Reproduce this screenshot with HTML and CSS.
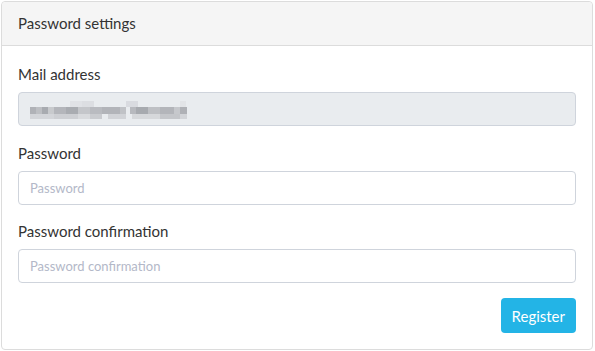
FILE: index.html
```html
<!DOCTYPE html>
<html lang="en">
<head>
    <meta charset="UTF-8">
    <meta name="viewport" content="width=device-width, initial-scale=1.0">
    <title>Password settings</title>
    <link rel="stylesheet" href="styles.css">
</head>
<body>

<div class="card">
    <div class="card-header">Password settings</div>

    <form class="card-body">
        <div class="form-group">
            <label class="form-label">Mail address</label>
            <div class="form-control disabled">
                <div class="masked-text"></div>
            </div>
        </div>

        <div class="form-group">
            <label class="form-label" for="password">Password</label>
            <input type="password" id="password" class="form-control" placeholder="Password">
        </div>

        <div class="form-group">
            <label class="form-label" for="passwordConfirm">Password confirmation</label>
            <input type="password" id="passwordConfirm" class="form-control" placeholder="Password confirmation">
        </div>

        <div class="form-actions">
            <button type="button" class="btn-register">Register</button>
        </div>
    </form>
</div>

</body>
</html>
```

FILE: styles.css
```css
* {
    box-sizing: border-box;
}
body {
    font-family: 'Lato', 'Liberation Sans', sans-serif;
    font-size: 15px;
    color: #333;
    background: #fff;
    margin: 1px;
}
.card {
    background-color: #fff;
    border: 1px solid #dcdcdc;
    border-radius: 4px;
    width: 592px;
    height: 349px;
}
.card-header {
    background-color: #f5f5f5;
    border-bottom: 1px solid #dcdcdc;
    border-radius: 4px 4px 0 0;
    padding: 10px 16px;
    height: 44px;
    line-height: 23px;
    font-size: 15px;
    color: #333;
}
.card-body {
    padding: 18px 16px 16px;
}
.form-group {
    margin-bottom: 16.5px;
}
.form-label {
    display: block;
    line-height: 21px;
    margin-bottom: 7px;
}
.form-control {
    display: block;
    width: 100%;
    height: 34px;
    padding: 6px 11px;
    font-family: inherit;
    font-size: 13px;
    color: #333;
    background-color: #fff;
    border: 1px solid #cfd4dc;
    border-radius: 4px;
    outline: none;
}
.form-control::placeholder {
    color: #b3b8c8;
}
.form-control.disabled {
    background-color: #e9ecef;
    padding: 8px 11px;
}

/* pixelated (hidden) address */
.masked-text {
    width: 157px;
    height: 18px;
    background:
        linear-gradient(to right, transparent 0 40px, #e0e2e6 40px 52px, transparent 52px 52px, #dcdee2 52px 64px, transparent 64px 96px, #d9dbe0 96px 108px, transparent 108px 150px, #e2e4e7 150px 156px, transparent 156px) 0 0 / 100% 6px no-repeat,
        linear-gradient(to right, #b0b2b7 0 6px, #bdbfc3 6px 12px, #a8abb0 12px 18px, #c8cacd 18px 24px, #b4b6bb 24px 36px, #a9acb1 36px 48px, #c4c6ca 48px 60px, #b9bbc0 60px 72px, #b2b4b9 72px 90px, #c0c2c6 90px 96px, transparent 96px 100px, #b7b9be 100px 106px, #a7aaaf 106px 118px, #bec0c4 118px 130px, #b3b5ba 130px 144px, #c6c8cc 144px 150px, #afb1b6 150px 157px) 0 6px / 100% 7px no-repeat,
        linear-gradient(to right, #d3d5d9 0 24px, #cdcfd3 24px 48px, #d8dadd 48px 60px, #c9cbcf 60px 72px, transparent 72px 78px, #d1d3d7 78px 96px, transparent 96px 102px, #d6d8db 102px 130px, #c4c6ca 130px 150px, #d2d4d8 150px 157px) 0 13px / 100% 5px no-repeat;
}
.form-actions {
    display: flex;
    justify-content: flex-end;
    margin-top: -1.5px;
}
.btn-register {
    height: 35px;
    padding: 0 11px;
    background-color: #23b4e6;
    color: #fff;
    border: none;
    border-radius: 4px;
    font-family: inherit;
    font-size: 15px;
    cursor: pointer;
}
.btn-register:hover {
    background-color: #1a9fce;
}
```
